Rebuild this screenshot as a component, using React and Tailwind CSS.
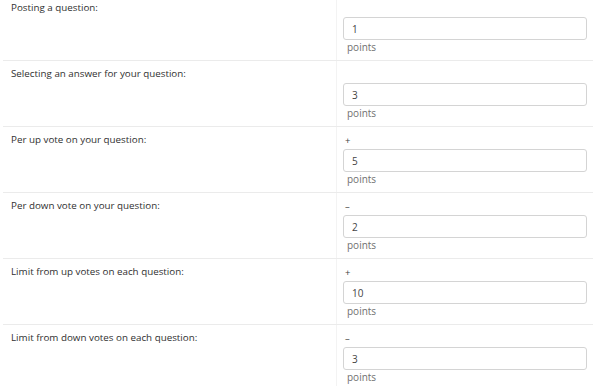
import React from "react";

const rows = [
  { label: "Posting a question:", sign: "", value: "1" },
  { label: "Selecting an answer for your question:", sign: "", value: "3" },
  { label: "Per up vote on your question:", sign: "+", value: "5" },
  { label: "Per down vote on your question:", sign: "–", value: "2" },
  { label: "Limit from up votes on each question:", sign: "+", value: "10" },
  { label: "Limit from down votes on each question:", sign: "–", value: "3" },
];

function PointsRow({ label, sign, value }) {
  return (
    <div className="flex h-[66px] border-b border-[#ebebeb]">
      {/* label cell */}
      <div className="w-[333px] pl-[8px] pt-[6px] text-[9.8px] leading-[14px] text-[#2f2f2f]">
        {label}
      </div>

      {/* value cell */}
      <div className="flex-1 border-l border-[#f3f3f3] pl-[6px] pr-[6px] pt-[8px]">
        <div className="h-[13px] pl-[2px] text-[9.5px] leading-[12px] text-[#444]">{sign}</div>
        <input
          type="text"
          defaultValue={value}
          className="mt-[1px] block h-[23px] w-full rounded-[3px] border border-[#d4d4d4] bg-white px-[8px] text-[10px] text-[#444] outline-none"
          style={{ fontFamily: "'Open Sans', sans-serif" }}
        />
        <div className="pl-[4px] text-[10px] leading-[15px] text-[#707070]">points</div>
      </div>
    </div>
  );
}

export default function App() {
  return (
    <div className="h-[386px] w-[600px] overflow-hidden bg-white font-['Open_Sans',sans-serif]">
      <div className="mt-[-5px] ml-[3px] w-[590px]">
        {rows.map((r) => (
          <PointsRow key={r.label} {...r} />
        ))}
      </div>
    </div>
  );
}
